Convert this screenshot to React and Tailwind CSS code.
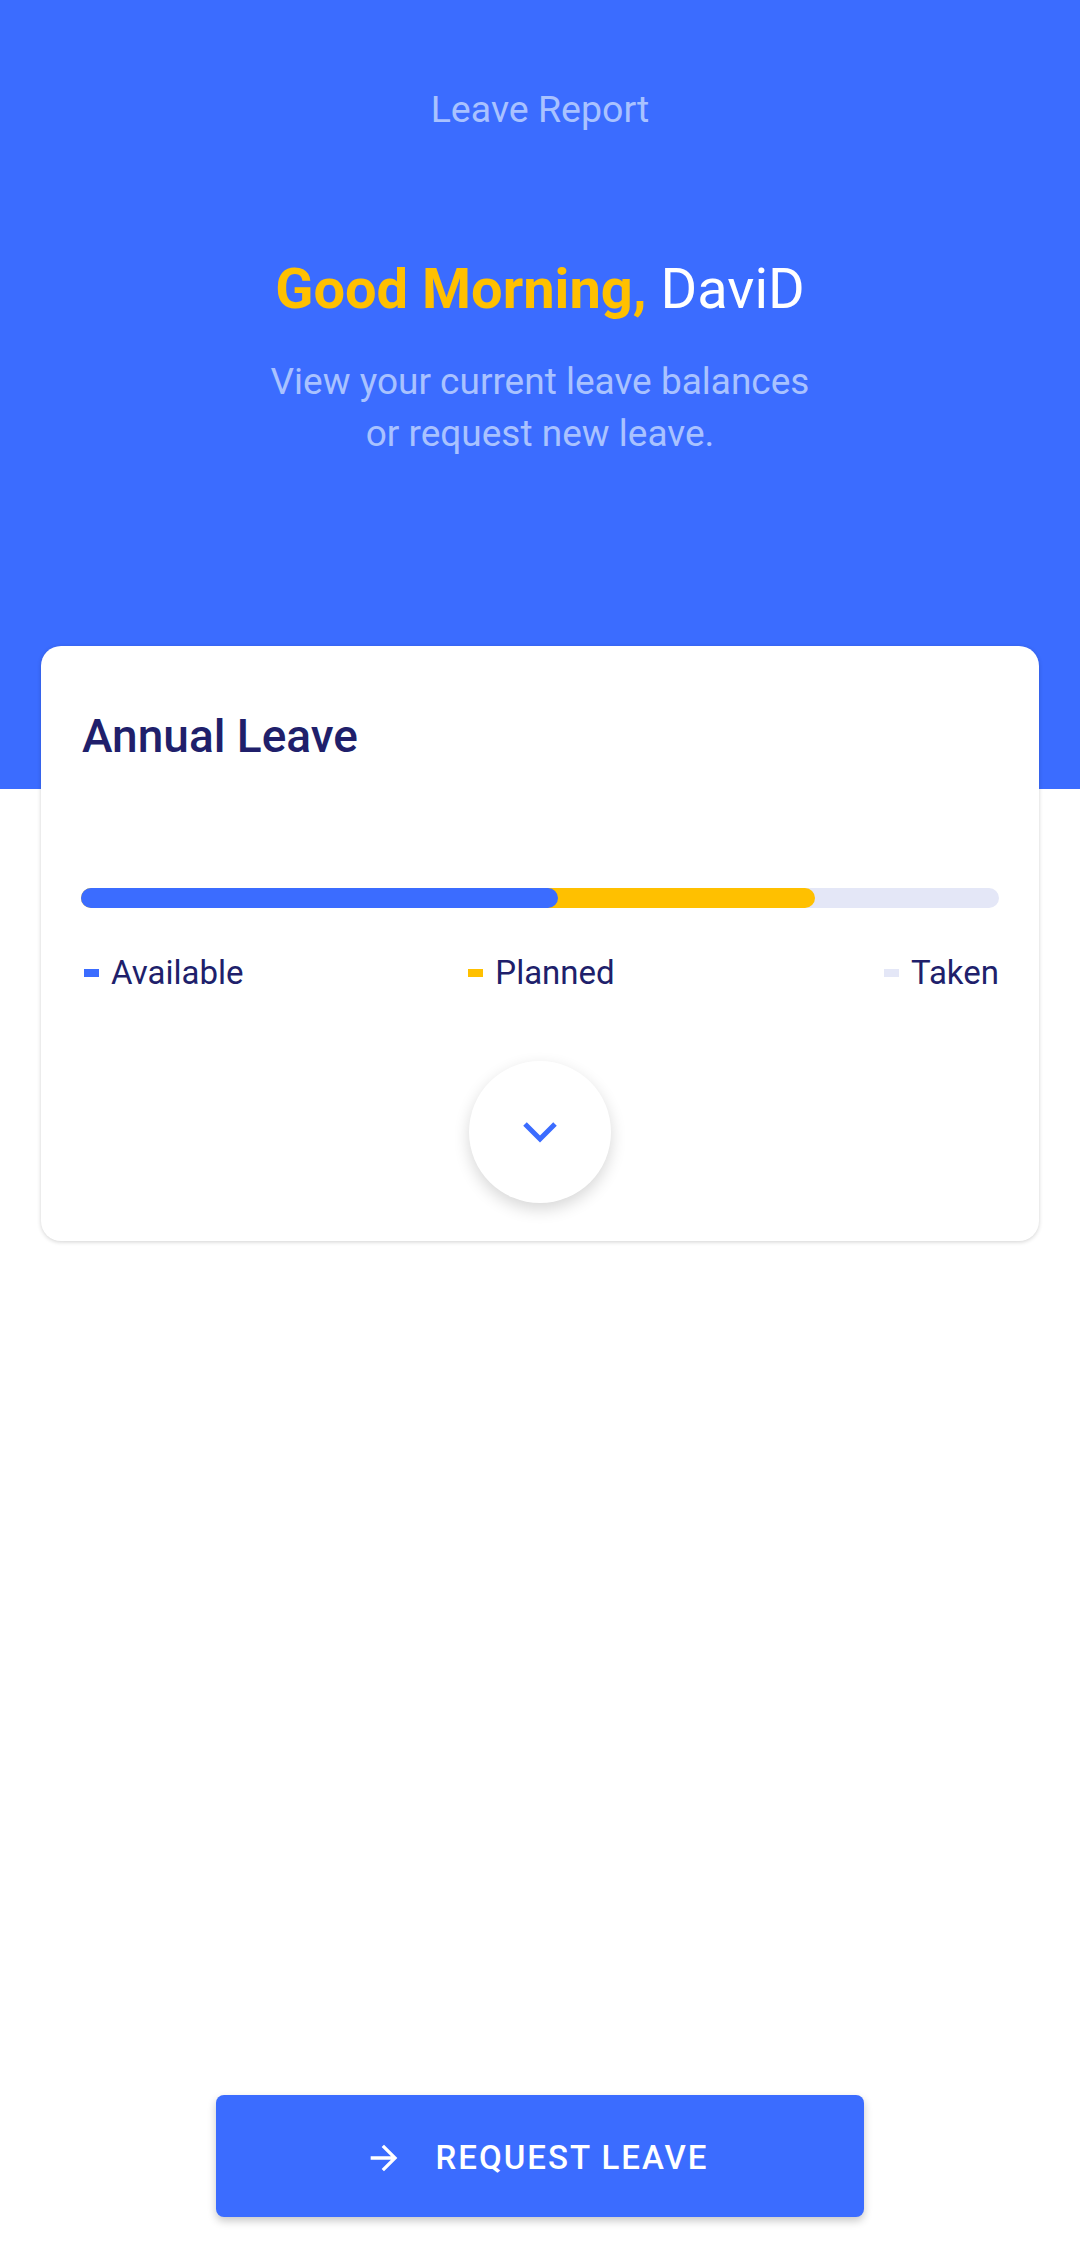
import React from 'react';

const legend = [
  { label: 'Available', color: 'bg-[#3b6cff]', place: 'justify-self-start' },
  { label: 'Planned', color: 'bg-[#ffc000]', place: 'justify-self-center' },
  { label: 'Taken', color: 'bg-[#e4e7f7]', place: 'justify-self-end' },
];

export default function App() {
  return (
    <div className="min-h-screen flex flex-col bg-white font-['Roboto',sans-serif]">
      {/* Header */}
      <div className="h-[789px] bg-[#3b6cff] flex flex-col items-center pt-[87px]">
        <p className="text-[37.5px] leading-[44px] text-[#a9c2ff]">Leave Report</p>
        <h1 className="mt-[125px] text-[56px] leading-[66px]">
          <span className="font-bold text-[#ffc000]">Good Morning,</span>{' '}
          <span className="text-white">DaviD</span>
        </h1>
        <p className="mt-[34px] text-[37px] leading-[52px] text-[#a9c2ff] text-center">
          View your current leave balances
          <br />
          or request new leave.
        </p>
      </div>

      {/* Annual leave card */}
      <div className="mt-[-143px] mx-[41px] bg-white rounded-[20px] shadow-[0_1px_4px_rgba(0,0,0,0.18)] px-[40px] pt-[62px] pb-[38px]">
        <h2 className="ml-[1px] text-[46px] leading-[56px] font-medium text-[#201f6b]">Annual Leave</h2>

        <div className="mt-[124px] relative h-[20px] rounded-full bg-[#e4e7f7]">
          <div className="absolute left-0 top-0 h-full w-[80%] rounded-full bg-[#ffc000]" />
          <div className="absolute left-0 top-0 h-full w-[52%] rounded-full bg-[#3b6cff]" />
        </div>

        <div className="mt-[46px] grid grid-cols-3 items-center">
          {legend.map((l) => (
            <div key={l.label} className={`flex items-center gap-[12px] ${l.place}`}>
              <span className={`w-[15px] h-[8px] ml-[3px] ${l.color}`} />
              <span className="text-[33px] leading-[38px] text-[#201f6b]">{l.label}</span>
            </div>
          ))}
        </div>

        <div className="mt-[69px] flex justify-center">
          <button className="w-[142px] h-[142px] rounded-full bg-white shadow-[0_6px_16px_rgba(0,0,0,0.16)] flex items-center justify-center">
            <svg width="36" height="22" viewBox="0 0 36 22" fill="none">
              <polyline points="3,3 18,18 33,3" stroke="#3b6cff" strokeWidth="5" />
            </svg>
          </button>
        </div>
      </div>

      {/* Request button */}
      <div className="mt-auto mb-[41px] flex justify-center">
        <button className="w-[648px] h-[122px] pt-[4px] pr-[8px] rounded-[8px] bg-[#3b6cff] shadow-[0_4px_8px_rgba(0,0,0,0.22)] flex items-center justify-center gap-[32px] text-white">
          <svg width="40" height="40" viewBox="0 0 24 24" fill="white">
            <path d="M12 4l-1.41 1.41L16.17 11H4v2h12.17l-5.58 5.59L12 20l8-8z" />
          </svg>
          <span className="text-[33px] font-medium tracking-[2px]">REQUEST LEAVE</span>
        </button>
      </div>
    </div>
  );
}
